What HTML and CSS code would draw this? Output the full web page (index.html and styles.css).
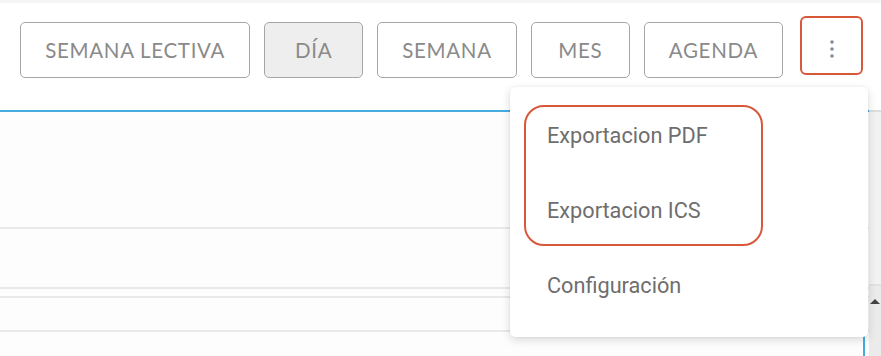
FILE: index.html
```html
<!DOCTYPE html>
<html lang="es">
<head>
<meta charset="utf-8">
<title>Calendario</title>
<link rel="stylesheet" href="styles.css">
</head>
<body>
<div class="page">
  <div class="topband"></div>
  <header class="toolbar">
    <button class="btn">SEMANA LECTIVA</button>
    <button class="btn active">DÍA</button>
    <button class="btn">SEMANA</button>
    <button class="btn">MES</button>
    <button class="btn">AGENDA</button>
    <button class="kebab" aria-label="Más opciones">
      <svg width="6" height="20" viewBox="0 0 6 20"><circle cx="3" cy="3" r="1.8"/><circle cx="3" cy="10" r="1.8"/><circle cx="3" cy="17" r="1.8"/></svg>
    </button>
  </header>
  <div class="calendar">
    <div class="grid">
      <div class="row r1"></div>
      <div class="row r2"></div>
      <div class="row r3"></div>
      <div class="row r4"></div>
      <div class="row r5"><div class="focus"></div></div>
    </div>
    <div class="scrollbar">
      <div class="sb-top"></div>
      <div class="sb-track"><span class="sb-arrow"></span></div>
    </div>
  </div>
  <div class="menu">
    <div class="highlight"></div>
    <div class="item">Exportacion PDF</div>
    <div class="item">Exportacion ICS</div>
    <div class="item">Configuración</div>
  </div>
</div>
</body>
</html>
```
FILE: styles.css
```css
* { box-sizing: border-box; }
html, body { margin: 0; padding: 0; }
body { background: #fdfdfd; font-family: Lato, "Liberation Sans", sans-serif; overflow: hidden; }
.page { position: relative; width: 881px; height: 356px; }
.topband { height: 3px; background: #f5f5f5; }
.toolbar {
  height: 107px;
  display: flex;
  justify-content: flex-end;
  align-items: flex-start;
  gap: 14px;
  padding: 19px 18px 0 0;
  background: #ffffff;
}
.btn {
  height: 56px;
  min-width: 99px;
  padding: 0 24px;
  border: 1.6px solid #a6a6a6;
  border-radius: 5px;
  background: #ffffff;
  color: #8a8a8a;
  font-family: Lato, "Liberation Sans", sans-serif;
  font-size: 20.5px;
  letter-spacing: 0.7px;
}
.btn.active { background: #eeeeee; }
.kebab {
  width: 63px;
  height: 59px;
  margin-top: -6px;
  margin-left: 3px;
  border: 2px solid #d8593a;
  border-radius: 6px;
  background: #ffffff;
  display: flex;
  align-items: center;
  justify-content: center;
  padding: 6px 0 0 0;
}
.kebab svg { fill: #7f8b99; }
.calendar { display: grid; grid-template-columns: 1fr 12px; height: 246px; }
.grid { border-top: 2px solid #45ace0; display: flex; flex-direction: column; }
.row { border-bottom: 2px solid #e9e9e9; }
.r1 { height: 117px; }
.r2 { height: 60px; }
.r3 { height: 9px; }
.r4 { height: 34px; }
.r5 { flex: 1; border-bottom: 0; position: relative; }
.focus { position: absolute; right: 4px; top: 4px; bottom: 0; width: 2px; background: #45ace0; }
.scrollbar { display: flex; flex-direction: column; background: #f2f2f2; }
.sb-top { height: 176px; border-top: 2px solid #dddddd; border-bottom: 2px solid #e2e2e2; }
.sb-track { flex: 1; background: #ebebeb; display: flex; justify-content: center; padding-top: 13px; }
.sb-arrow { width: 0; height: 0; border-left: 5px solid transparent; border-right: 5px solid transparent; border-bottom: 5px solid #444; }
.menu {
  position: absolute;
  left: 510px;
  top: 87px;
  width: 358px;
  height: 250px;
  background: #ffffff;
  border-radius: 5px;
  box-shadow: 0 3px 10px rgba(0,0,0,0.14), 0 0 3px rgba(0,0,0,0.06);
  padding: 11px 0 14px 0;
  display: flex;
  flex-direction: column;
}
.item {
  height: 75px;
  display: flex;
  align-items: center;
  padding-left: 37px;
  font-family: Roboto, "Liberation Sans", sans-serif;
  font-size: 21.7px;
  color: #6e6e6e;
}
.highlight {
  position: absolute;
  left: 14px;
  top: 18px;
  width: 239px;
  height: 141px;
  border: 2px solid #d8593a;
  border-radius: 20px;
}
```
